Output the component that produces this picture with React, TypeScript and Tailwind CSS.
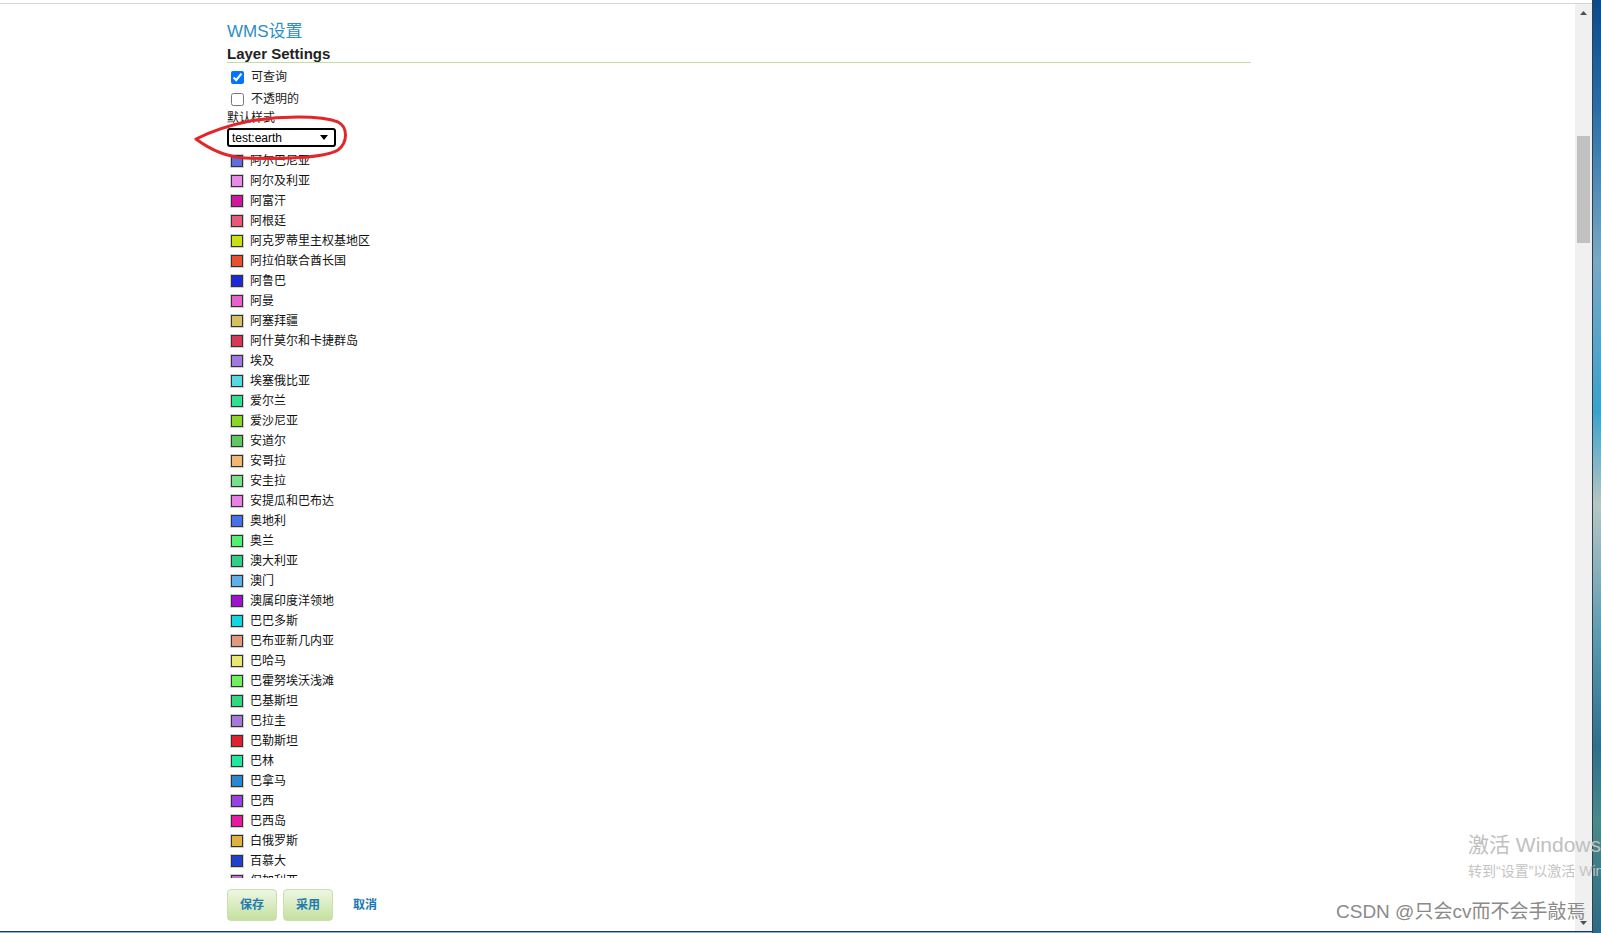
const countries: [string, string][] = [
  ["阿尔巴尼亚", "#5b6ee0"],
  ["阿尔及利亚", "#e88ae8"],
  ["阿富汗", "#d0189c"],
  ["阿根廷", "#e85878"],
  ["阿克罗蒂里主权基地区", "#c8e010"],
  ["阿拉伯联合酋长国", "#e85030"],
  ["阿鲁巴", "#1a2ad8"],
  ["阿曼", "#e860d0"],
  ["阿塞拜疆", "#d4c060"],
  ["阿什莫尔和卡捷群岛", "#d83858"],
  ["埃及", "#a078e0"],
  ["埃塞俄比亚", "#58d8e0"],
  ["爱尔兰", "#30e090"],
  ["爱沙尼亚", "#88d828"],
  ["安道尔", "#60c860"],
  ["安哥拉", "#f0b870"],
  ["安圭拉", "#78e088"],
  ["安提瓜和巴布达", "#e880e8"],
  ["奥地利", "#4870e8"],
  ["奥兰", "#50f070"],
  ["澳大利亚", "#30d088"],
  ["澳门", "#60b0e8"],
  ["澳属印度洋领地", "#a010d0"],
  ["巴巴多斯", "#10d8e0"],
  ["巴布亚新几内亚", "#e09880"],
  ["巴哈马", "#e8e870"],
  ["巴霍努埃沃浅滩", "#70f060"],
  ["巴基斯坦", "#30d880"],
  ["巴拉圭", "#a878d8"],
  ["巴勒斯坦", "#e02030"],
  ["巴林", "#20e8a0"],
  ["巴拿马", "#2888d0"],
  ["巴西", "#9840e0"],
  ["巴西岛", "#e818a0"],
  ["白俄罗斯", "#e0b040"],
  ["百慕大", "#2040d0"],
  ["保加利亚", "#c070d0"],
]

function Scrollbar() {
  return (
    <div className="flex w-[17px] flex-col bg-[#f0f0f0]">
      <div className="flex h-[17px] items-center justify-center">
        <svg width="7" height="4" viewBox="0 0 7 4">
          <path d="M0 4 L3.5 0 L7 4 Z" fill="#505050" />
        </svg>
      </div>
      <div className="mx-[2px] mt-[115px] h-[107px] bg-[#c1c1c1]" />
      <div className="flex-1" />
      <div className="flex h-[17px] items-center justify-center">
        <svg width="7" height="4" viewBox="0 0 7 4">
          <path d="M0 0 L3.5 4 L7 0 Z" fill="#505050" />
        </svg>
      </div>
    </div>
  )
}

function CheckRow({ label, checked }: { label: string; checked?: boolean }) {
  return (
    <div className="flex h-[22px] items-center">
      <input type="checkbox" defaultChecked={checked} className="m-0 ml-[4px] h-[13px] w-[13px]" />
      <span className="ml-[7px] text-[12px] text-[#222]">{label}</span>
    </div>
  )
}

export default function App() {
  return (
    <div className="relative flex h-[933px] w-[1601px] overflow-hidden bg-white font-['Liberation_Sans','Noto_Sans_CJK_SC',sans-serif]">
      <div className="flex w-[1592px] flex-col">
        <div className="h-[3px] bg-white" />
        <div className="h-px bg-[#d6d6d6]" />
        <div className="flex min-h-0 flex-1">
          <main className="flex-1 pl-[227px] pt-[18px]">
            <div className="w-[1024px]">
              <h2 className="text-[17px] leading-[20px] text-[#2d8ec9]">WMS设置</h2>
              <h3 className="mt-[3px] border-b border-[#c5dca0] text-[15px] font-bold leading-[17px] text-[#222]">
                Layer Settings
              </h3>
              <div className="pt-[3px]">
                <CheckRow label="可查询" checked />
                <CheckRow label="不透明的" />
              </div>
              <div className="mt-[1px] text-[12px] leading-[14px] text-[#222]">默认样式</div>
              <div className="mt-[3px] flex h-[19px] w-[109px] items-center justify-between rounded-[3px] border-2 border-black pl-[3px] pr-[6px] text-[12px] text-black">
                <span>test:earth</span>
                <svg width="8" height="5" viewBox="0 0 8 5">
                  <path d="M0 0 L4 5 L8 0 Z" fill="#000" />
                </svg>
              </div>
              <div className="mt-[4px] h-[727px] overflow-hidden">
                {countries.map(([name, color]) => (
                  <div key={name} className="flex h-[20px] items-center">
                    <span
                      className="ml-[4px] h-[12px] w-[12px] border border-[#333] shadow-[0_0_0_1px_#cfcfcf]"
                      style={{ backgroundColor: color }}
                    />
                    <span className="ml-[7px] text-[12px] leading-[14px] text-[#111]">{name}</span>
                  </div>
                ))}
              </div>
              <div className="mt-[11px] flex items-center">
                <button className="h-[32px] w-[50px] rounded-[4px] border border-[#c8dfae] bg-gradient-to-b from-[#eef7e2] to-[#c4e09e] text-[12px] font-bold text-[#1f7bb0]">
                  保存
                </button>
                <button className="ml-[6px] h-[32px] w-[50px] rounded-[4px] border border-[#c8dfae] bg-gradient-to-b from-[#eef7e2] to-[#c4e09e] text-[12px] font-bold text-[#1f7bb0]">
                  采用
                </button>
                <a className="ml-[20px] text-[12px] font-bold text-[#1a78b0]">取消</a>
              </div>
            </div>
          </main>
          <Scrollbar />
        </div>
        <div className="h-px bg-[#203850]" />
        <div className="h-px bg-[#8fb0c8]" />
      </div>
      <div className="w-[9px] border-l border-[#2f3f4f] bg-[linear-gradient(to_bottom,#0b4a8c_0%,#2a70a8_12%,#7aa8c4_28%,#3aa2cc_44%,#b8c6c2_54%,#5d9bb2_68%,#2f6f8c_80%,#4a8a8a_88%,#2e6a86_100%)]" />

      <svg
        className="pointer-events-none absolute left-[185px] top-[110px]"
        width="170"
        height="55"
        viewBox="0 0 170 55"
      >
        <path
          d="M11 29 C25 22 40 16 65 11 C95 6 135 5 153 12 C163 17 163 32 153 40 C140 48 95 49 60 48 C40 47 23 38 11 29"
          fill="none"
          stroke="#e3262a"
          strokeWidth="3"
          strokeLinecap="round"
        />
      </svg>

      <div className="pointer-events-none absolute left-[1468px] top-[833px] whitespace-nowrap text-[21px] leading-[24px] text-[#c0c0c0]">
        激活 Windows
      </div>
      <div className="pointer-events-none absolute left-[1468px] top-[862px] whitespace-nowrap text-[14px] leading-[18px] text-[#c4c4c4]">
        转到“设置”以激活 Windows。
      </div>
      <div className="pointer-events-none absolute left-[1336px] top-[900px] whitespace-nowrap text-[19px] leading-[24px] text-[#8a8a8a]">
        CSDN @只会cv而不会手敲焉
      </div>
    </div>
  )
}
